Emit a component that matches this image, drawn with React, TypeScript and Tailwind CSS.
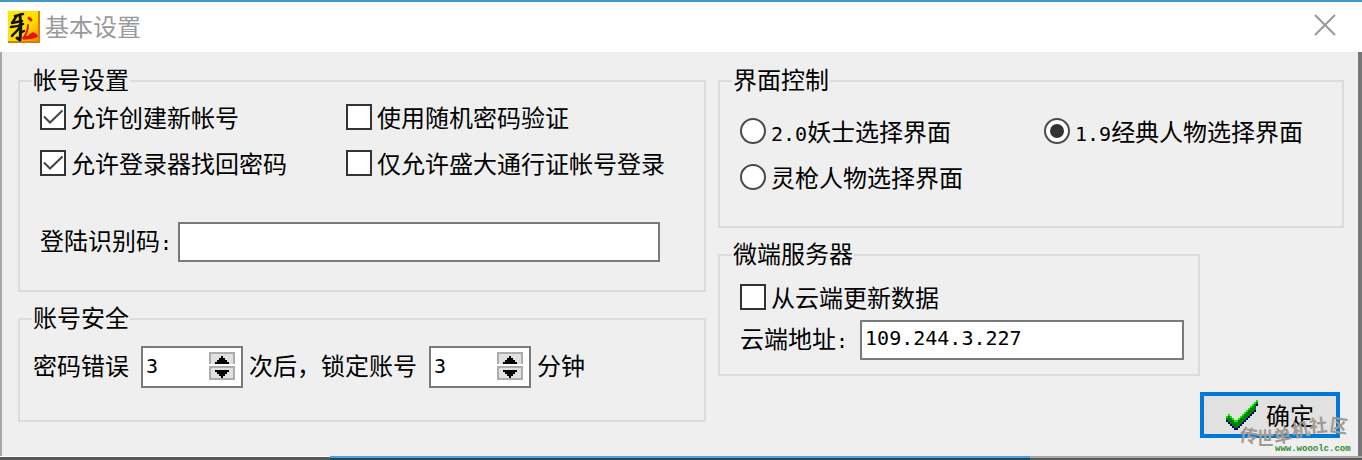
import { useState } from 'react';
import type { ReactNode } from 'react';

function Group({ title, className = '', children }: { title: string, className?: string, children: ReactNode }) {
  return (
    <fieldset className={`min-w-0 border-2 border-[#dcdcdc] ${className}`}>
      <legend className="ml-3 px-px pb-1 leading-6">{title}</legend>
      {children}
    </fieldset>
  );
}

// Half-width characters, two to one Chinese character
function Half({ children }: { children: ReactNode }) {
  return <span className="font-['DejaVu_Sans_Mono',monospace] text-xl leading-none">{children}</span>;
}

function Check({ label, checked = false }: { label: string, checked?: boolean }) {
  return (
    <label className="flex h-[26px] items-center gap-[5px] whitespace-nowrap leading-[26px]">
      <span className="relative size-[26px] shrink-0">
        <input type="checkbox" defaultChecked={checked} className="peer block size-[26px] appearance-none border-2 border-[#333] bg-white" />
        <svg viewBox="0 0 26 26" className="pointer-events-none absolute inset-0 hidden peer-checked:block" fill="none" stroke="#444" strokeWidth="2">
          <path d="M4 12.500l6 6L22.500 6.500" />
        </svg>
      </span>
      {label}
    </label>
  );
}

function Radio({ prefix, label, checked = false }: { prefix?: string, label: string, checked?: boolean }) {
  return (
    <label className="flex h-[26px] items-center gap-[5px] whitespace-nowrap leading-[26px]">
      <span className="relative size-[26px] shrink-0">
        <input type="radio" name="screen" defaultChecked={checked} className="peer block size-[26px] appearance-none rounded-full border-2 border-[#4a4a4a] bg-white" />
        <span className="pointer-events-none absolute inset-[6px] hidden rounded-full bg-[#333] peer-checked:block" />
      </span>
      <span>
        {prefix && <Half>{prefix}</Half>}
        {label}
      </span>
    </label>
  );
}

function Spinner({ id, label }: { id: string, label: string }) {
  const [value, setValue] = useState(3);

  return (
    <div className="ml-3 mr-[6px] flex h-[42px] w-[102px] shrink-0 items-start border-2 border-[#7a7a7a] bg-white pr-[6px] pt-1">
      <input
        id={id}
        aria-label={label}
        value={value}
        onChange={(e) => setValue(Number(e.target.value) || 0)}
        className="h-7 w-full min-w-0 pl-[3px] font-['DejaVu_Sans_Mono',monospace] text-xl leading-7 outline-none"
      />
      <div className="flex w-[26px] shrink-0 flex-col gap-[2px]">
        <button type="button" aria-label="+" onClick={() => setValue(value + 1)} className="flex h-3 items-end justify-center border-2 border-b-0 border-[#adadad] bg-[#e1e1e1]">
          <svg width="16" height="8" viewBox="0 0 16 8" shapeRendering="crispEdges"><path d="M7 0h2v2h2v2h2v2h2v2H1V6h2V4h2V2h2z" /></svg>
        </button>
        <button type="button" aria-label="-" onClick={() => setValue(value - 1)} className="flex h-[14px] items-start justify-center border-2 border-[#adadad] bg-[#e1e1e1] pt-[2px]">
          <svg width="16" height="8" viewBox="0 0 16 8" shapeRendering="crispEdges"><path d="M1 0h14v2h-2v2h-2v2H9v2H7V6H5V4H3V2H1z" /></svg>
        </button>
      </div>
    </div>
  );
}

function AppIcon() {
  return (
    <svg width="32" height="32" viewBox="0 0 32 32">
      <defs>
        <linearGradient id="gold" x1="0" y1="0" x2="1" y2="1">
          <stop offset="0" stopColor="#ffe800" />
          <stop offset="0.600" stopColor="#ffe000" />
          <stop offset="1" stopColor="#f08a00" />
        </linearGradient>
      </defs>
      <rect width="32" height="32" fill="#dc7a10" />
      <rect width="30" height="30" fill="url(#gold)" />
      <g fill="none" stroke="#111" strokeLinecap="round" strokeLinejoin="round">
        <path d="M7 5c3 0 5-2 8-2M8 6l-4 6 10-2" strokeWidth="2.500" />
        <path d="M12 5c1 7 1 15 0 24l-3-2" strokeWidth="3" />
        <path d="M15 13c-4 2-8 3-12 3M11 17c-2 4-5 5-7 8M16 20l-4 2" strokeWidth="2.500" />
      </g>
      <g fill="none" stroke="#ee1111" strokeLinecap="round" strokeLinejoin="round">
        <path d="M21 7l2 2" strokeWidth="3" />
        <path d="M20 14c0 4-1 8-4 12" strokeWidth="2" />
        <path d="M16 27c4-1 8 0 12-2l-3-2-3 2" strokeWidth="3.500" />
      </g>
    </svg>
  );
}

const TICK_TOPS = [8, 7, 8, 9, 10, 10, 9, 8, 7, 6, 5, 4, 3, 2, 1, 0];

function Tick() {
  return (
    <svg width="32" height="30" viewBox="0 0 16 15" shapeRendering="crispEdges" className="shrink-0">
      {TICK_TOPS.map((top, x) => (
        <g key={x}>
          <rect x={x} y={top} width="1" height="1" fill="#00f000" />
          <rect x={x} y={top + 1} width="1" height={x === 0 || x === 15 ? 1 : 3} fill="#008000" />
          <rect x={x} y={top + (x === 0 || x === 15 ? 2 : 4)} width="1" height="1" fill="#000080" />
        </g>
      ))}
    </svg>
  );
}

function Watermark() {
  return (
    <svg width="124" height="48" viewBox="0 0 124 48" className="pointer-events-none absolute bottom-0 right-0">
      <text
        x="1 18 37 55 72 91"
        y="29 33 32 26 21 19"
        rotate="8 0 -12 -12 -6 8"
        fill="#a19a92"
        className="font-['Noto_Sans_CJK_SC',sans-serif] text-lg font-bold"
      >
        传世单机社区
      </text>
      <text x="37" y="39" fill="#2f8a2f" className="font-['Liberation_Mono',monospace] text-[9px] font-bold">www.wooolc.com</text>
    </svg>
  );
}

export default function App() {
  return (
    <div className="relative border-t-2 border-[#4599c9] bg-[#efefef] font-['Noto_Sans_CJK_SC',sans-serif] text-2xl leading-6 text-black">
      <header className="flex h-[50px] items-center justify-between bg-white pl-2 pr-[26px]">
        <div className="flex items-center gap-[5px]">
          <AppIcon />
          <h1 className="pb-[2px] text-[#999]">基本设置</h1>
        </div>
        <button type="button" aria-label="关闭" className="pb-1">
          <svg width="22" height="22" viewBox="0 0 22 22" stroke="#999" strokeWidth="2"><path d="M1 1l20 20M21 1L1 21" /></svg>
        </button>
      </header>

      <div className="border-l-2 border-[#a8a8a8]">
        <main className="grid grid-cols-[688fr_626fr] gap-3 border-r-4 border-[#777] pb-[18px] pl-4 pr-[14px] pt-[15px]">
          <div className="flex min-w-0 flex-col gap-[13px]">
            <Group title="帐号设置">
              <div className="pb-7 pl-5 pt-[9px]">
                <div className="grid grid-cols-[306px_1fr] gap-y-5">
                  <Check label="允许创建新帐号" checked />
                  <Check label="使用随机密码验证" />
                  <Check label="允许登录器找回密码" checked />
                  <Check label="仅允许盛大通行证帐号登录" />
                </div>
                <div className="mt-[46px] flex h-10 items-center gap-[6px] pr-11">
                  <label htmlFor="code" className="shrink-0 pb-1">登陆识别码<Half>:</Half></label>
                  <input id="code" className="h-10 w-full min-w-0 border-2 border-[#7a7a7a] bg-white px-[3px] outline-none" />
                </div>
              </div>
            </Group>

            <Group title="账号安全">
              <div className="flex items-center whitespace-nowrap pb-8 pl-[13px] pt-[13px]">
                <label htmlFor="errors" className="pb-1">密码错误</label>
                <Spinner id="errors" label="密码错误" />
                <label htmlFor="minutes" className="pb-1">次后，锁定账号</label>
                <Spinner id="minutes" label="锁定账号" />
                <span className="pb-1">分钟</span>
              </div>
            </Group>
          </div>

          <div className="flex min-w-0 flex-col">
            <Group title="界面控制">
              <div className="grid grid-cols-[304px_1fr] gap-y-5 pb-9 pl-5 pt-[23px]">
                <Radio prefix="2.0" label="妖士选择界面" />
                <Radio prefix="1.9" label="经典人物选择界面" checked />
                <Radio label="灵枪人物选择界面" />
              </div>
            </Group>

            <Group title="微端服务器" className="mt-[13px] w-[77%]">
              <div className="pb-[14px] pl-5 pr-[14px] pt-[15px]">
                <Check label="从云端更新数据" />
                <div className="mt-[10px] flex h-10 items-center gap-3">
                  <label htmlFor="address" className="shrink-0 pb-1">云端地址<Half>:</Half></label>
                  <input
                    id="address"
                    defaultValue="109.244.3.227"
                    className="h-10 w-full min-w-0 border-2 border-[#7a7a7a] bg-white pb-1 pl-[3px] font-['DejaVu_Sans_Mono',monospace] text-xl outline-none"
                  />
                </div>
              </div>
            </Group>

            <button type="button" className="mr-1 mt-4 flex h-[46px] w-[140px] items-center gap-2 self-end border-4 border-[#0078d7] bg-[#e1e1e1] pl-[22px]">
              <Tick />
              <span>确定</span>
            </button>
          </div>
        </main>
      </div>

      <div className="flex h-1 bg-[#5a5a5a]">
        <div className="w-[24.200%] border-t border-white" />
        <div className="w-[51.400%] border-t-2 border-[#45a3de] bg-[#24475c]" />
        <div className="grow border-t-2 border-[#a8a8a8]" />
      </div>
      <Watermark />
    </div>
  );
}
